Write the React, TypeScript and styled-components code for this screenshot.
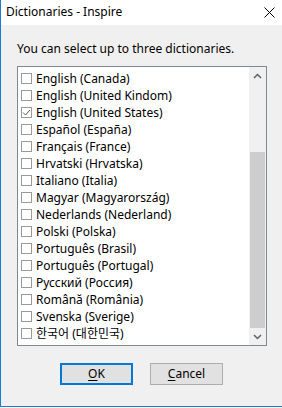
import React, { useState } from "react";
import styled, { createGlobalStyle } from "styled-components";

const GlobalStyle = createGlobalStyle`
  html, body {
    margin: 0;
    padding: 0;
    background: #ffffff;
  }
  body {
    font-family: "Noto Sans", "Noto Sans CJK KR", sans-serif;
    font-size: 12px;
    color: #000;
  }
`;

const Window = styled.div`
  width: 282px;
  height: 407px;
  box-sizing: border-box;
  border-left: 1px solid #1c7ad4;
  border-bottom: 1px solid #1c7ad4;
  display: flex;
  flex-direction: column;
  background: #f0f0f0;
`;

const TitleBar = styled.div`
  height: 24px;
  flex: none;
  background: #fff;
  display: flex;
  align-items: center;
  justify-content: space-between;
  padding: 0 7px 1px 5px;
`;

const Title = styled.span`
  font-size: 12px;
  line-height: 16px;
`;

const CloseButton = styled.div`
  width: 12px;
  height: 12px;
  display: flex;
  align-items: center;
  justify-content: center;
`;

const Body = styled.div`
  flex: 1;
  display: flex;
  flex-direction: column;
  padding: 16px 15px 0 16px;
`;

const Label = styled.div`
  line-height: 16px;
  height: 16px;
  margin-bottom: 9px;
`;

const ListBox = styled.div`
  height: 280px;
  box-sizing: border-box;
  border: 1px solid #828790;
  background: #fff;
  display: flex;
`;

const Items = styled.ul`
  flex: 1;
  list-style: none;
  margin: 0;
  padding: 3px 0 0 3px;
`;

const Item = styled.li`
  height: 17px;
  display: flex;
  align-items: center;
  gap: 4px;
  white-space: nowrap;
  cursor: default;
`;

const Box = styled.span<{ $checked: boolean }>`
  width: 11px;
  height: 11px;
  box-sizing: border-box;
  border: 1px solid #9a9a9a;
  background: #fff;
  flex: none;
  display: flex;
  align-items: center;
  justify-content: center;
`;

const ItemText = styled.span`
  line-height: 17px;
`;

const ScrollBar = styled.div`
  width: 17px;
  flex: none;
  background: #f0f0f0;
  display: flex;
  flex-direction: column;
`;

const Arrow = styled.div`
  height: 17px;
  flex: none;
  display: flex;
  align-items: center;
  justify-content: center;
`;

const Track = styled.div`
  flex: 1;
  display: flex;
  flex-direction: column;
  justify-content: flex-end;
  padding: 0 1px;
`;

const Thumb = styled.div`
  height: 176px;
  background: #cdcdcd;
`;

const Buttons = styled.div`
  display: flex;
  justify-content: center;
  gap: 17px;
  margin-top: 17px;
  padding-right: 1px;
`;

const Button = styled.button<{ $primary?: boolean }>`
  width: 73px;
  height: 22px;
  box-sizing: border-box;
  background: #e1e1e1;
  border: ${(p) => (p.$primary ? "2px solid #0078d7" : "1px solid #adadad")};
  font-family: inherit;
  font-size: 12px;
  color: #000;
  padding: 0;
  line-height: 16px;
  u {
    text-underline-offset: 2px;
  }
`;

const dictionaries = [
  "English (Canada)",
  "English (United Kindom)",
  "English (United States)",
  "Español (España)",
  "Français (France)",
  "Hrvatski (Hrvatska)",
  "Italiano (Italia)",
  "Magyar (Magyarország)",
  "Nederlands (Nederland)",
  "Polski (Polska)",
  "Português (Brasil)",
  "Português (Portugal)",
  "Русский (Россия)",
  "Română (România)",
  "Svenska (Sverige)",
  "한국어 (대한민국)",
];

export default function App() {
  const [checked, setChecked] = useState<string[]>(["English (United States)"]);

  const toggle = (name: string) => {
    if (checked.includes(name)) {
      setChecked(checked.filter((c) => c !== name));
    } else if (checked.length < 3) {
      setChecked([...checked, name]);
    }
  };

  return (
    <>
      <GlobalStyle />
      <Window>
        <TitleBar>
          <Title>Dictionaries - Inspire</Title>
          <CloseButton>
            <svg width="11" height="11" viewBox="0 0 11 11">
              <path d="M0.5 0.5 L10.5 10.5 M10.5 0.5 L0.5 10.5" stroke="#000" strokeWidth="1" />
            </svg>
          </CloseButton>
        </TitleBar>
        <Body>
          <Label>You can select up to three dictionaries.</Label>
          <ListBox>
            <Items>
              {dictionaries.map((d) => (
                <Item key={d} onClick={() => toggle(d)}>
                  <Box $checked={checked.includes(d)}>
                    {checked.includes(d) && (
                      <svg width="9" height="9" viewBox="0 0 9 9">
                        <path d="M1 4.5 L3.5 7 L8 2" fill="none" stroke="#555" strokeWidth="1" />
                      </svg>
                    )}
                  </Box>
                  <ItemText>{d}</ItemText>
                </Item>
              ))}
            </Items>
            <ScrollBar>
              <Arrow>
                <svg width="9" height="6" viewBox="0 0 9 6">
                  <path d="M1 5 L4.5 1.5 L8 5" fill="none" stroke="#606060" strokeWidth="1.5" />
                </svg>
              </Arrow>
              <Track>
                <Thumb />
              </Track>
              <Arrow>
                <svg width="9" height="6" viewBox="0 0 9 6">
                  <path d="M1 1 L4.5 4.5 L8 1" fill="none" stroke="#606060" strokeWidth="1.5" />
                </svg>
              </Arrow>
            </ScrollBar>
          </ListBox>
          <Buttons>
            <Button $primary>
              <u>O</u>K
            </Button>
            <Button>
              <u>C</u>ancel
            </Button>
          </Buttons>
        </Body>
      </Window>
    </>
  );
}
